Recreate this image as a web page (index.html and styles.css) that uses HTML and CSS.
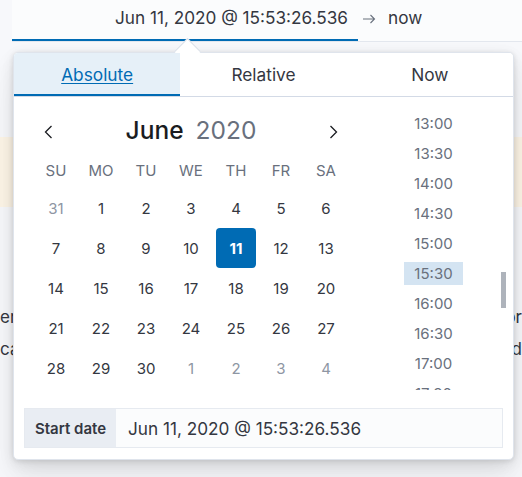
FILE: index.html
```html
<!DOCTYPE html>
<html lang="en">
<head>
<meta charset="utf-8">
<title>Date picker</title>
<link rel="stylesheet" href="styles.css">
</head>
<body>
<div class="bar">
  <div class="start">Jun 11, 2020 @ 15:53:26.536</div>
  <svg class="arrow" width="14" height="10" viewBox="0 0 14 10"><path d="M1 5H12.5M8.5 1L12.5 5L8.5 9" fill="none" stroke="#69707d" stroke-width="1.1"/></svg>
  <div class="end">now</div>
</div>
<div class="callout"></div>
<div class="text-lines">
  <div class="line"><span>er</span><span>or</span></div>
  <div class="line"><span>ca</span><span>d</span></div>
</div>

<div class="popover">
  <div class="pop-arrow"></div>
  <div class="tabs">
    <div class="tab active">Absolute</div>
    <div class="tab">Relative</div>
    <div class="tab">Now</div>
  </div>
  <div class="body">
    <div class="cal">
      <div class="cal-head">
        <div class="nav"><svg width="16" height="16" viewBox="0 0 16 16"><path d="M10.5 2L4.5 8L10.5 14" fill="none" stroke="#1a1c21" stroke-width="1.3"/></svg></div>
        <div class="month"><span class="m">June</span><span class="y">2020</span></div>
        <div class="nav"><svg width="16" height="16" viewBox="0 0 16 16"><path d="M5.5 2L11.5 8L5.5 14" fill="none" stroke="#1a1c21" stroke-width="1.3"/></svg></div>
      </div>
      <div class="dow">
        <div>SU</div><div>MO</div><div>TU</div><div>WE</div><div>TH</div><div>FR</div><div>SA</div>
      </div>
      <div class="days">
        <div class="day out">31</div><div class="day">1</div><div class="day">2</div><div class="day">3</div><div class="day">4</div><div class="day">5</div><div class="day">6</div>
        <div class="day">7</div><div class="day">8</div><div class="day">9</div><div class="day">10</div><div class="day sel">11</div><div class="day">12</div><div class="day">13</div>
        <div class="day">14</div><div class="day">15</div><div class="day">16</div><div class="day">17</div><div class="day">18</div><div class="day">19</div><div class="day">20</div>
        <div class="day">21</div><div class="day">22</div><div class="day">23</div><div class="day">24</div><div class="day">25</div><div class="day">26</div><div class="day">27</div>
        <div class="day">28</div><div class="day">29</div><div class="day">30</div><div class="day out">1</div><div class="day out">2</div><div class="day out">3</div><div class="day out">4</div>
      </div>
    </div>
    <div class="times">
      <div class="time-list" id="timeList">
        <div class="t">00:00</div><div class="t">00:30</div><div class="t">01:00</div><div class="t">01:30</div>
        <div class="t">02:00</div><div class="t">02:30</div><div class="t">03:00</div><div class="t">03:30</div>
        <div class="t">04:00</div><div class="t">04:30</div><div class="t">05:00</div><div class="t">05:30</div>
        <div class="t">06:00</div><div class="t">06:30</div><div class="t">07:00</div><div class="t">07:30</div>
        <div class="t">08:00</div><div class="t">08:30</div><div class="t">09:00</div><div class="t">09:30</div>
        <div class="t">10:00</div><div class="t">10:30</div><div class="t">11:00</div><div class="t">11:30</div>
        <div class="t">12:00</div><div class="t">12:30</div><div class="t">13:00</div><div class="t">13:30</div>
        <div class="t">14:00</div><div class="t">14:30</div><div class="t">15:00</div><div class="t sel">15:30</div>
        <div class="t">16:00</div><div class="t">16:30</div><div class="t">17:00</div><div class="t">17:30</div>
        <div class="t">18:00</div><div class="t">18:30</div><div class="t">19:00</div><div class="t">19:30</div>
        <div class="t">20:00</div><div class="t">20:30</div><div class="t">21:00</div><div class="t">21:30</div>
        <div class="t">22:00</div><div class="t">22:30</div><div class="t">23:00</div><div class="t">23:30</div>
      </div>
      <div class="thumb"></div>
    </div>
  </div>
  <div class="footer">
    <div class="field">
      <div class="label">Start date</div>
      <div class="value">Jun 11, 2020 @ 15:53:26.536</div>
    </div>
  </div>
</div>
<script src="script.js"></script>
</body>
</html>
```

FILE: styles.css
```css
html, body {
  margin: 0;
  padding: 0;
}
body {
  background: #f7f8fb;
  font-family: Inter, "Noto Sans", "Liberation Sans", sans-serif;
  color: #343741;
  width: 522px;
  height: 477px;
  overflow: hidden;
  position: relative;
}
.bar {
  margin-left: 12px;
  height: 41px;
  background: #fbfcfd;
  border-bottom: 1px solid #e3e7ee;
  display: flex;
  align-items: flex-start;
  font-size: 17.2px;
}
.start {
  width: 346px;
  box-sizing: border-box;
  height: 41px;
  line-height: 36px;
  text-align: right;
  padding-right: 10px;
  box-shadow: inset 0 -2px 0 #006bb4;
  color: #343741;
  white-space: nowrap;
}
.arrow {
  margin: 14px 0 0 4px;
}
.end {
  line-height: 36px;
  margin-left: 12px;
}
.callout {
  margin-top: 95px;
  height: 70px;
  background: #fdf5e7;
}
.text-lines {
  margin-top: 94px;
  font-size: 17px;
  line-height: 32px;
}
.line {
  display: flex;
  justify-content: space-between;
}

.popover {
  position: absolute;
  left: 13px;
  top: 52px;
  width: 501px;
  height: 408px;
  box-sizing: border-box;
  background: #fff;
  border: 1px solid #dfe4ec;
  border-radius: 5px;
  box-shadow: 0 1px 5px rgba(0,0,0,0.1), 0 3.6px 13px rgba(0,0,0,0.07), 0 8.4px 23px rgba(0,0,0,0.06), 0 23px 35px rgba(0,0,0,0.05);
}
.pop-arrow {
  position: absolute;
  left: 164px;
  top: -11px;
  width: 18px;
  height: 18px;
  background: #fff;
  border-left: 1px solid #d9dfe8;
  border-top: 1px solid #d9dfe8;
  transform: rotate(45deg);
}
.tabs {
  position: relative;
  display: flex;
  height: 44px;
  box-sizing: border-box;
  border-bottom: 1px solid #d3dae6;
  background: #fff;
  border-radius: 4px 4px 0 0;
}
.tab {
  flex: 1;
  display: flex;
  align-items: center;
  justify-content: center;
  font-size: 17.3px;
  color: #343741;
}
.tab.active {
  background: #e6f0f8;
  color: #006bb4;
  text-decoration: underline;
  text-underline-offset: 2px;
  box-shadow: inset 0 -2px 0 #006bb4;
  border-radius: 4px 0 0 0;
}
.body {
  display: flex;
  height: 293px;
}
.cal {
  padding: 15px 0 0 22px;
  width: 310px;
}
.cal-head {
  height: 36px;
  display: flex;
  align-items: center;
  justify-content: space-between;
}
.nav {
  width: 26px;
  height: 26px;
  display: flex;
  align-items: center;
  justify-content: center;
  margin-top: 4px;
}
.month {
  font-size: 24.5px;
  color: #1a1c21;
  display: flex;
  gap: 12px;
}
.month .m {
  font-weight: 500;
}
.month .y {
  color: #69707d;
}
.dow {
  margin-top: 7px;
  display: grid;
  grid-template-columns: repeat(7, 40px);
  column-gap: 5px;
  height: 30px;
  margin-bottom: 3px;
}
.dow div {
  display: flex;
  align-items: center;
  justify-content: center;
  font-size: 15px;
  color: #69707d;
}
.days {
  display: grid;
  grid-template-columns: repeat(7, 40px);
  grid-auto-rows: 40px;
  column-gap: 5px;
}
.day {
  display: flex;
  align-items: center;
  justify-content: center;
  font-size: 15px;
  color: #343741;
  border-radius: 4px;
}
.day.out {
  color: #8e96a3;
}
.day.sel {
  background: #006bb4;
  color: #fff;
  font-weight: 700;
}
.times {
  position: relative;
  margin-left: 38px;
  width: 124px;
}
.time-list {
  margin-top: 21px;
  height: 272px;
  overflow: hidden;
  padding-left: 20px;
}
.t {
  width: 59px;
  height: 23px;
  line-height: 23px;
  margin-bottom: 7px;
  text-align: center;
  font-size: 15px;
  color: #69707d;
}
.t.sel {
  background: #d4e4f2;
}
.thumb {
  position: absolute;
  left: 117px;
  top: 175px;
  width: 5px;
  height: 36px;
  background: #aeb3bb;
}
.footer {
  margin-top: 18px;
  padding: 0 10px;
}
.field {
  display: flex;
  height: 40px;
  box-sizing: border-box;
  border: 1px solid #e6eaf0;
  background: #fbfcfd;
}
.label {
  width: 91px;
  background: #e9edf3;
  font-size: 15px;
  font-weight: 600;
  display: flex;
  align-items: center;
  padding-left: 10px;
  box-sizing: border-box;
  color: #343741;
}
.value {
  display: flex;
  align-items: center;
  padding-left: 12px;
  font-size: 17.2px;
  color: #343741;
}
```

FILE: script.js
```js
document.getElementById('timeList').scrollTop = 786;
```
